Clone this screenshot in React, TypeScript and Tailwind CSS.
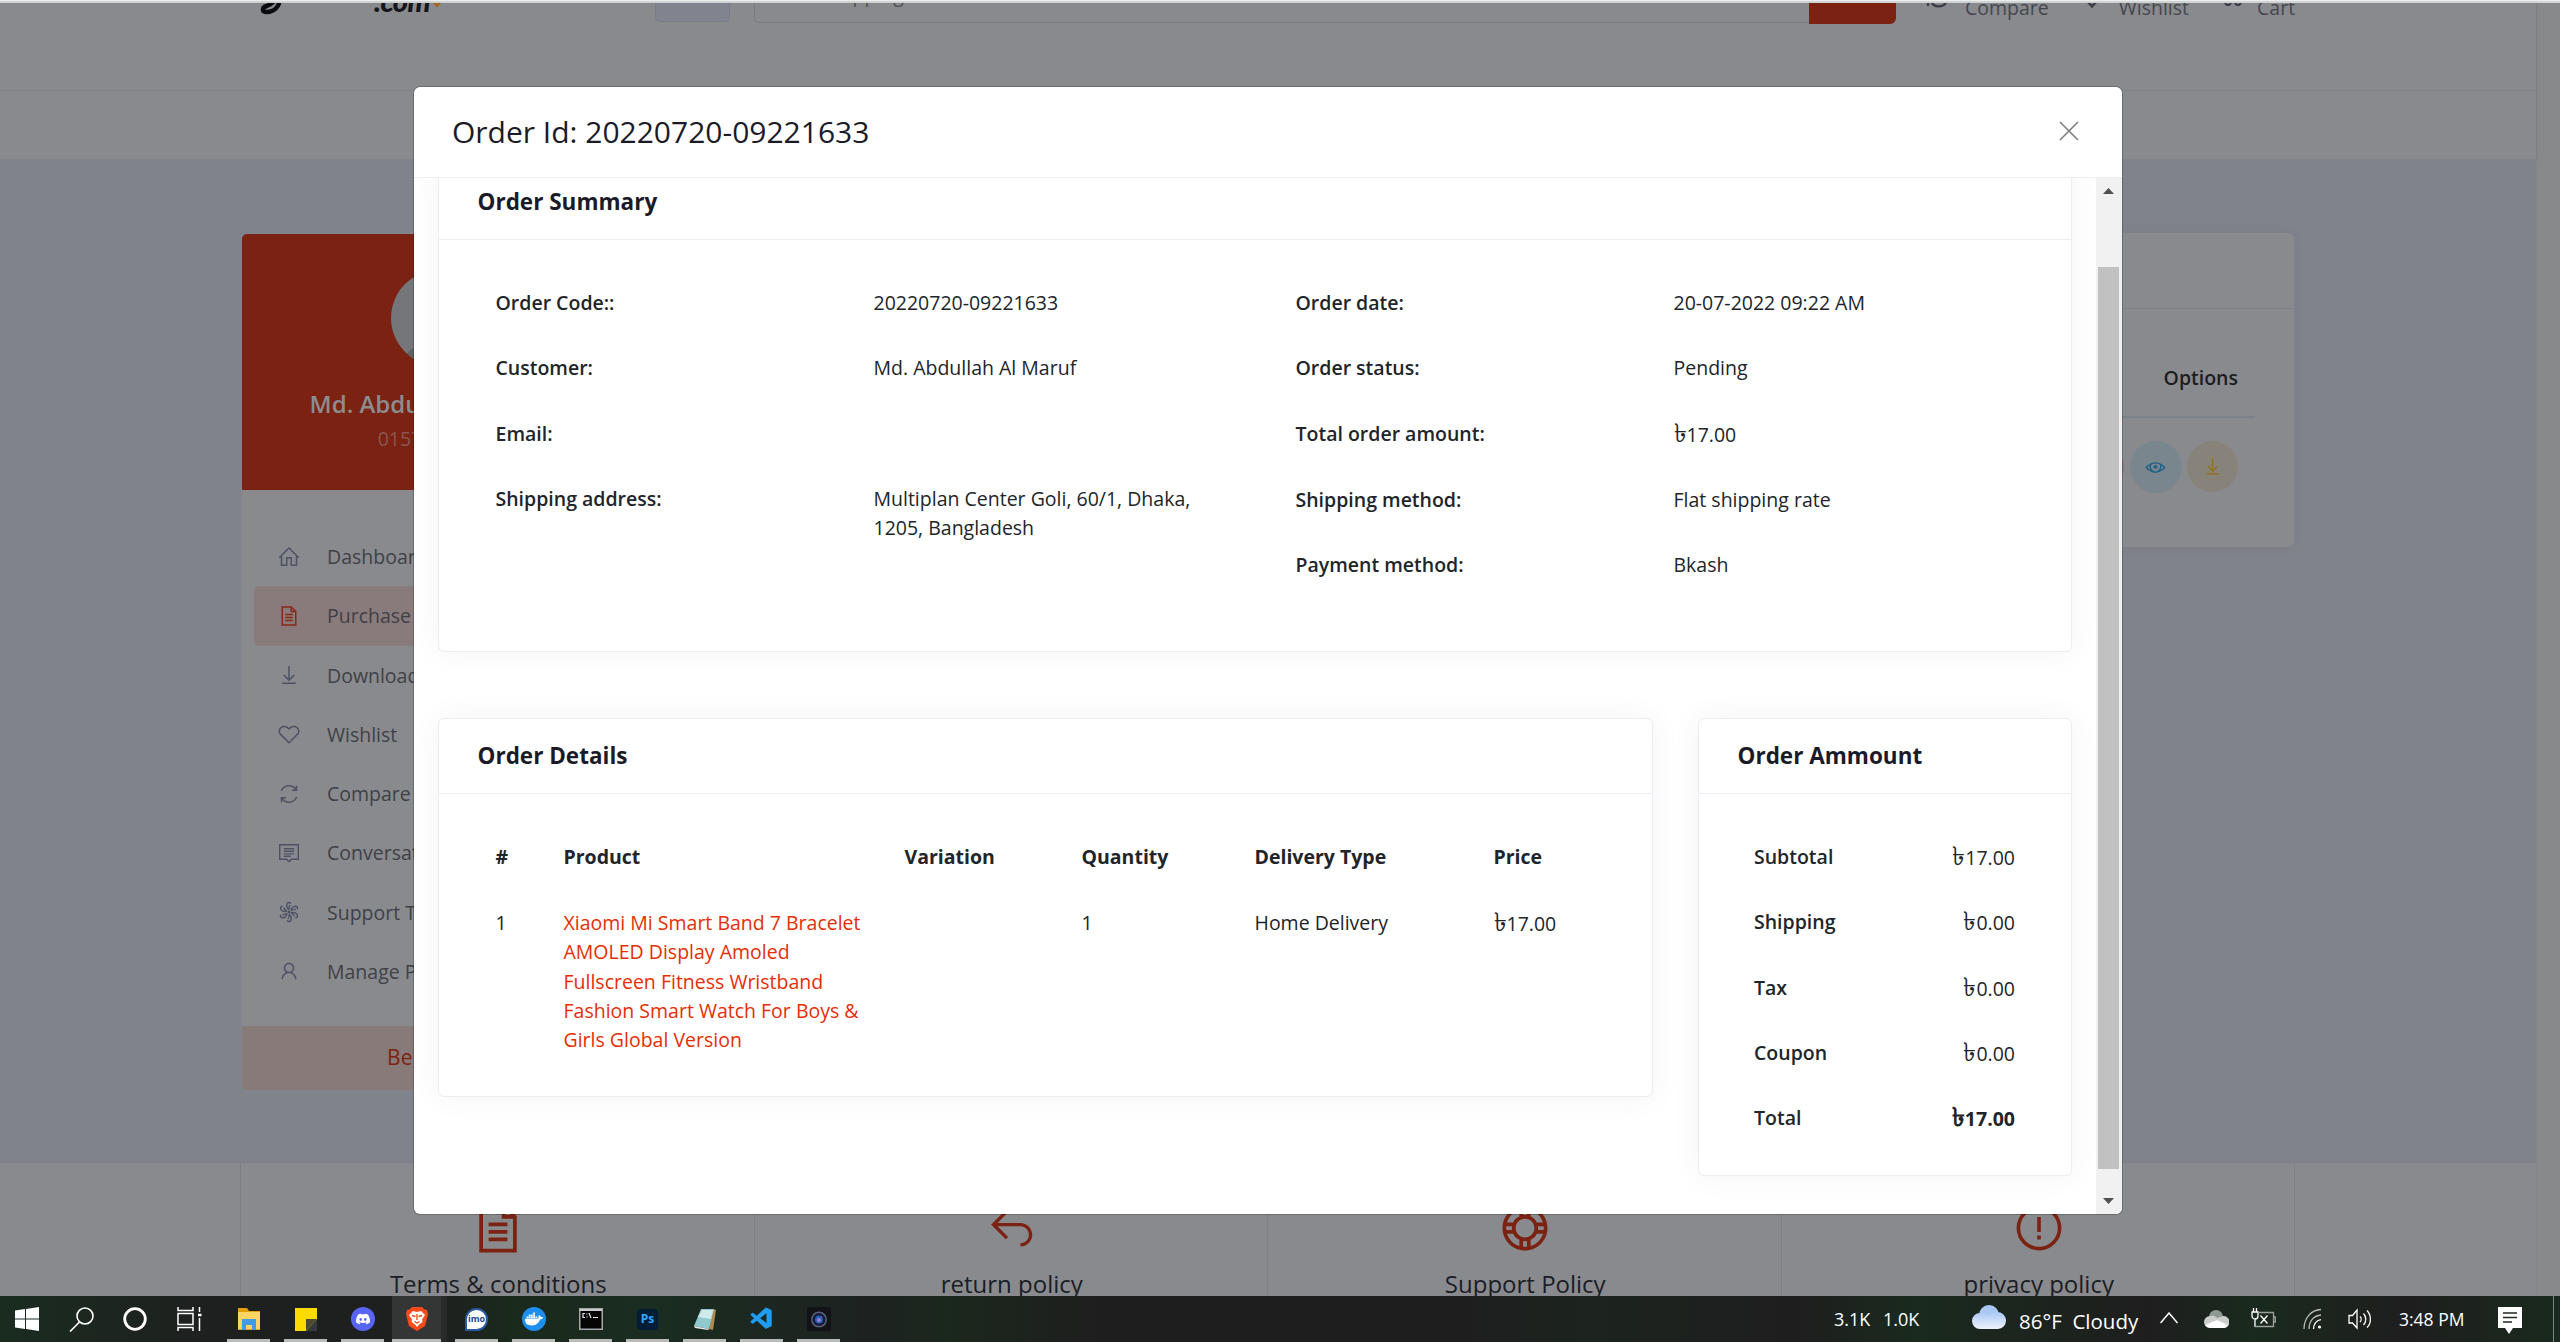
import React from "react";
import {
  LiaHomeSolid,
  LiaFileAlt,
  LiaDownloadSolid,
  LiaHeart,
  LiaSyncSolid,
  LiaUser,
  LiaEye,
  LiaReplySolid,
  LiaLifeRing,
} from "react-icons/lia";
import { SiDiscord, SiDocker } from "react-icons/si";
import { VscVscode } from "react-icons/vsc";

const summaryLeft = [
  ["Order Code::", "20220720-09221633"],
  ["Customer:", "Md. Abdullah Al Maruf"],
  ["Email:", ""],
  ["Shipping address:", "Multiplan Center Goli, 60/1, Dhaka, 1205, Bangladesh"],
];
const summaryRight = [
  ["Order date:", "20-07-2022 09:22 AM"],
  ["Order status:", "Pending"],
  ["Total order amount:", "৳17.00"],
  ["Shipping method:", "Flat shipping rate"],
  ["Payment method:", "Bkash"],
];
const amounts = [
  ["Subtotal", "৳17.00"],
  ["Shipping", "৳0.00"],
  ["Tax", "৳0.00"],
  ["Coupon", "৳0.00"],
];

/* The taka sign is set larger than the digits that follow it. */
function Value({ text }: { text: string }) {
  if (!text.startsWith("৳")) return <>{text}</>;
  return (
    <>
      <span className="text-[26px] leading-none">৳</span>
      {text.slice(1)}
    </>
  );
}

function MessageIcon() {
  return (
    <svg width="24" height="24" viewBox="0 0 24 24" fill="none" stroke="currentColor" strokeWidth="1.4">
      <path d="M2.7 3.7h18.6v14.6h-6.8L12 20.6l-2.5-2.3H2.7z" />
      <path d="M6.8 7.7h10.4M6.8 10.3h10.4M6.8 12.9h10.4M6.8 15.3h7" />
    </svg>
  );
}

function PinwheelIcon() {
  const arm = "M12 9.600C9.800 8.500 9 5.500 10.300 3.400C11.200 2 13.300 2.200 13.900 3.600M12 9.600C11.600 7.800 12 6.200 13.200 4.900";
  return (
    <svg width="24" height="24" viewBox="0 0 24 24" fill="none" stroke="currentColor" strokeWidth="1.4">
      <path d={arm} />
      <path d={arm} transform="rotate(60 12 12)" />
      <path d={arm} transform="rotate(120 12 12)" />
      <path d={arm} transform="rotate(180 12 12)" />
      <path d={arm} transform="rotate(240 12 12)" />
      <path d={arm} transform="rotate(300 12 12)" />
      <circle cx="12" cy="12" r="1.500" fill="currentColor" stroke="none" />
    </svg>
  );
}

const menu = [
  { icon: <LiaHomeSolid size={24} />, label: "Dashboard" },
  { icon: <LiaFileAlt size={24} />, label: "Purchase History", active: true },
  { icon: <LiaDownloadSolid size={24} />, label: "Downloads" },
  { icon: <LiaHeart size={24} />, label: "Wishlist" },
  { icon: <LiaSyncSolid size={24} />, label: "Compare" },
  { icon: <MessageIcon />, label: "Conversations" },
  { icon: <PinwheelIcon />, label: "Support Ticket" },
  { icon: <LiaUser size={24} />, label: "Manage Profile" },
];

function TopBar() {
  return (
    <header className="h-[156px] shrink-0 bg-[#898a8d] shadow-[0_1px_3px_rgba(0,0,0,0.12)]">
      <div className="flex h-[88px] items-start overflow-hidden border-b border-[#808184]">
        <div className="ml-[255px] flex w-[400px] items-start">
          <svg width="190" height="16" viewBox="0 0 190 16" className="shrink-0">
            <path d="M25 -4C24 4 19 9 12 9C6.500 9 7 4.500 11.500 3C16 1.500 19 -1 21 -5" fill="none" stroke="#0b0c10" strokeWidth="4.500" />
            <path d="M178 0h8l-4 4.500z" fill="#a8651a" />
          </svg>
          <span className="-mt-[19px] -ml-[71px] font-['Lato'] text-[29px] leading-[34px] font-black tracking-[-0.5px] text-[#15161b] italic">
            .com
          </span>
        </div>
        <div className="h-[19px] w-[75px] rounded-b-[5px] border border-t-0 border-[#797c86] bg-[#81848f]" />
        <div className="ml-[24px] flex h-[20px] w-[1055px] items-start rounded-bl-[5px] border-b border-l border-[#7a7b7e] pl-5">
          <span className="-mt-[23px] text-[19.5px] leading-[29px] text-[#505156]">I am shopping for...</span>
        </div>
        <div className="h-[21px] w-[87px] rounded-br-[6px] bg-[#7b2212]" />
        <div className="ml-[28px] flex h-[29px] text-[19.5px] leading-[29px] text-[#46474d]">
          <svg width="26" height="8" viewBox="0 0 26 8" className="mr-[15px]" fill="none" stroke="#3a3b44" strokeWidth="2.2">
            <path d="M4 -1v4M8 0c2 4 10 5 14 0" />
          </svg>
          <span className="-mt-[10px]">Compare</span>
          <svg width="20" height="8" viewBox="0 0 20 8" className="mr-[17px] ml-[33px]" fill="none" stroke="#3a3b44" strokeWidth="2.4">
            <path d="M6 -1l4 4.500l4-4.500" />
          </svg>
          <span className="-mt-[10px]">Wishlist</span>
          <svg width="22" height="8" viewBox="0 0 22 8" className="mr-[13px] ml-[33px]" fill="none" stroke="#3a3b44" strokeWidth="2.2">
            <path d="M3 -1c1 4 5 4 6 0M13 -1c1 4 5 4 6 0" />
          </svg>
          <span className="-mt-[10px]">Cart</span>
        </div>
      </div>
    </header>
  );
}

function Sidebar() {
  return (
    <aside className="h-[858px] w-[396px] overflow-hidden rounded-[6px] border border-[#84868c] bg-[#898a8d]">
      <div className="flex h-[256px] flex-col items-center bg-[#7b2212] pt-[36px]">
        <div className="size-[96px] overflow-hidden rounded-full bg-[#757679]">
          <div className="mt-[71px] ml-[8px] h-[60px] w-[80px] rounded-[50%] bg-[#5f6063]" />
        </div>
        <div className="mt-[20px] text-[24px] leading-[36px] font-semibold text-[#8c8d8f]">Md. Abdullah Al Maruf</div>
        <div className="mt-[2px] text-[19.5px] leading-[29px] text-[#8a5750]">01570000000</div>
      </div>
      <nav className="flex h-[536px] flex-col px-[12px] pt-[37px]">
        {menu.map((m) => (
          <div
            key={m.label}
            className={
              m.active
                ? "flex h-[59.25px] items-center rounded-[5px] bg-[#897a7b] text-[#8a2716]"
                : "flex h-[59.25px] items-center text-[#4e5164]"
            }
          >
            <span className="ml-[23px] flex w-[24px] justify-center">{m.icon}</span>
            <span className="ml-[26px] text-[19.5px] text-[#3f4147]">{m.label}</span>
          </div>
        ))}
      </nav>
      <div className="flex h-[64px] items-center justify-center bg-[#887a79] text-[21px] text-[#7b2212]">Be A Seller</div>
    </aside>
  );
}

function HistoryCard() {
  return (
    <div className="h-[314px] w-[1612px] rounded-[6px] bg-[#898a8d] shadow-[0_0_20px_rgba(0,0,0,0.03)]">
      <div className="h-[76px] border-b border-[#7f8186]" />
      <div className="mr-[39px] ml-[38px] flex h-[109px] items-center justify-end border-b-2 border-[#7b8188] pt-[31px] pr-[17px] text-[19.5px] font-semibold text-[#1b1d22]">
        Options
      </div>
      <div className="mt-[23px] flex justify-end gap-[5.5px] pr-[56px]">
        <span className="size-[51px] rounded-full bg-[#88797d]" />
        <span className="flex size-[52px] items-center justify-center rounded-full bg-[#79868e] text-[#1d6288]">
          <LiaEye size={21} />
        </span>
        <span className="flex size-[51px] items-center justify-center rounded-full bg-[#87837a] text-[#94701c]">
          <LiaDownloadSolid size={21} />
        </span>
      </div>
    </div>
  );
}

const policies = [
  { label: "Terms & conditions", icon: <LiaFileAlt size={60} /> },
  { label: "return policy", icon: <LiaReplySolid size={54} /> },
  { label: "Support Policy", icon: <LiaLifeRing size={60} /> },
  {
    label: "privacy policy",
    icon: (
      <svg width="54" height="54" viewBox="0 0 54 54" fill="none" stroke="currentColor" strokeWidth="3.6">
        <circle cx="27" cy="27" r="20.6" />
        <path d="M27 16v15M27 34.500v4" />
      </svg>
    ),
  },
];

function Policies() {
  return (
    <section className="flex h-[134px] shrink-0 overflow-hidden border-t border-[#7c7f83] bg-[#898a8d] pl-[240px]">
      <div className="flex border-l border-[#7c7f83]">
        {policies.map((p) => (
          <div key={p.label} className="flex h-[180px] w-[513.5px] flex-col items-center border-r border-[#7c7f83] pt-[35px] pl-[2px] text-[#7b2212]">
            <span className="flex h-[60px] items-center">{p.icon}</span>
            <span className="mt-[8px] text-[24px] leading-[36px] text-[#1b1d25]">{p.label}</span>
          </div>
        ))}
      </div>
    </section>
  );
}

function PairTable({ rows }: { rows: string[][] }) {
  return (
    <div className="w-[754px]">
      {rows.map(([k, v]) => (
        <div key={k} className="flex py-[18px] leading-[29.25px]">
          <div className="w-[378px] pl-[18px] font-semibold">{k}</div>
          <div className="w-[376px] pr-[17px] pl-[18px]">
            <Value text={v} />
          </div>
        </div>
      ))}
    </div>
  );
}

function CardTitle({ children }: { children: React.ReactNode }) {
  return (
    <div className="flex h-[75px] items-center border-b-[1.5px] border-[#ebedf2] pb-px pl-[38.5px] text-[22.5px] font-bold text-[#1b1b28]">
      {children}
    </div>
  );
}

function OrderModal() {
  const card = "rounded-[6px] border-[1.5px] border-[#ebedf2] bg-white shadow-[0_0_30px_rgba(82,63,105,0.06)]";
  return (
    <div className="absolute top-[87px] left-[414px] flex h-[1127px] w-[1708px] flex-col overflow-hidden rounded-[6px] bg-white shadow-[0_0_0_1px_rgba(0,0,0,0.22)]">
      <div className="flex h-[91px] shrink-0 items-center justify-between border-b-[1.5px] border-[#ebedf2] pr-[43px] pb-[2px] pl-[38px]">
        <h5 className="text-[30px] text-[#1b1b28]">Order Id: 20220720-09221633</h5>
        <svg width="20" height="20" viewBox="0 0 20 20" stroke="#7d7d7d" strokeWidth="1.6">
          <path d="M1 1l18 18M19 1L1 19" />
        </svg>
      </div>
      <div className="flex min-h-0 flex-1">
        <div className="min-w-0 flex-1 overflow-hidden pl-[24px] text-[19.5px] text-[#212529]">
          <div className={`${card} -mt-[14px] h-[488px] w-[1634px]`}>
            <CardTitle>Order Summary</CardTitle>
            <div className="flex gap-[46px] pt-[30px] pl-[38.5px]">
              <PairTable rows={summaryLeft} />
              <PairTable rows={summaryRight} />
            </div>
          </div>
          <div className="mt-[66px] flex items-start gap-[45px]">
            <div className={`${card} h-[379px] w-[1215px]`}>
              <CardTitle>Order Details</CardTitle>
              <div className="grid grid-cols-[68px_341px_177px_173px_239px_1fr] gap-y-[36.75px] pt-[48px] pl-[56.5px] leading-[29.25px] [&>b]:font-bold">
                <b>#</b>
                <b>Product</b>
                <b>Variation</b>
                <b>Quantity</b>
                <b>Delivery Type</b>
                <b>Price</b>
                <span>1</span>
                <span className="w-[305px] text-[#e62e04]">
                  Xiaomi Mi Smart Band 7 Bracelet AMOLED Display Amoled Fullscreen Fitness Wristband Fashion Smart Watch For Boys &amp; Girls Global Version
                </span>
                <span />
                <span>1</span>
                <span>Home Delivery</span>
                <span>
                  <Value text="৳17.00" />
                </span>
              </div>
            </div>
            <div className={`${card} h-[458px] w-[374px]`}>
              <CardTitle>Order Ammount</CardTitle>
              <div className="pt-[30px] pr-[56px] pl-[55px] leading-[29.25px]">
                {amounts.map(([k, v]) => (
                  <div key={k} className="flex h-[65.25px] justify-between py-[18px]">
                    <span className="font-semibold">{k}</span>
                    <span>
                      <Value text={v} />
                    </span>
                  </div>
                ))}
                <div className="flex justify-between py-[18px]">
                  <span className="font-semibold">Total</span>
                  <span className="font-bold">
                    <Value text="৳17.00" />
                  </span>
                </div>
              </div>
            </div>
          </div>
        </div>
        <div className="flex w-[26px] shrink-0 flex-col items-center bg-[#f1f1f1] pr-px">
          <svg width="11" height="6" viewBox="0 0 11 6" className="mt-[10px]">
            <path d="M5.500 0L11 6H0z" fill="#505050" />
          </svg>
          <div className="mt-[73px] h-[902px] w-[21px] bg-[#c1c1c1]" />
          <svg width="11" height="6" viewBox="0 0 11 6" className="mt-[29px]">
            <path d="M0 0h11L5.500 6z" fill="#505050" />
          </svg>
        </div>
      </div>
    </div>
  );
}

const apps = [
  <svg key="explorer" width="24" height="24" viewBox="0 0 24 24">
    <path d="M1 1h9l2 3h11v19H1z" fill="#e3a008" />
    <path d="M1 5h22v17H1z" fill="#fcd462" />
    <path d="M5 12h14v11h-4v-5H9v5H5z" fill="#3f9be3" />
  </svg>,
  <svg key="notes" width="24" height="24" viewBox="0 0 24 24">
    <path d="M1 1h22v12L13 24H1z" fill="#fedb00" />
    <path d="M23 12v12H12z" fill="#343a40" />
    <path d="M12 24V12h11z" fill="#4a4a3c" />
  </svg>,
  <span key="discord" className="flex size-6 items-center justify-center rounded-full bg-[#5865f2] text-white">
    <SiDiscord size={14} />
  </span>,
  <svg key="brave" width="22" height="24" viewBox="0 0 22 24">
    <path d="M6 0h10l2.500 2.500L21 3l1 4-3 12-8 5-8-5L0 7l1-4 2.500-.5z" fill="#fb4a1c" />
    <path d="M7 4l4 1 4-1 4 4-3 4.500.5 2.500-3.500 2.500L11 20l-2-2.500L5.500 15l.5-2.500L3 8z" fill="#fff" />
    <path d="M6 8.500l3.500 1M16 8.500l-3.500 1M11 7v6M8.500 14.500L11 16l2.500-1.500" stroke="#fb4a1c" strokeWidth="1.400" fill="none" />
  </svg>,
  <span key="imo" className="flex size-[23px] items-center justify-center rounded-full rounded-bl-[4px] border-[2.5px] border-[#2a5ba0] bg-white text-[9px] font-bold text-[#20488c]">
    imo
  </span>,
  <span key="docker" className="flex size-6 items-center justify-center rounded-full bg-[#1d8fee] text-white">
    <SiDocker size={18} />
  </span>,
  <svg key="cmd" width="24" height="22" viewBox="0 0 24 22">
    <rect x="0.750" y="0.750" width="22.500" height="20.500" fill="#050505" stroke="#a5a8aa" strokeWidth="1.500" />
    <path d="M1 2h22" stroke="#c9cbcc" strokeWidth="2" />
    <path d="M6 5.500H4v4h2M8 5.500v1M8 8.500v1M10 5l2 5M14 9.500h5" stroke="#e8e8e8" strokeWidth="1.200" fill="none" />
  </svg>,
  <span key="ps" className="flex size-[21px] items-center justify-center rounded-[4px] bg-[#001e36] text-[12px] font-bold text-[#31a8ff]">
    Ps
  </span>,
  <svg key="notepad" width="24" height="24" viewBox="0 0 24 24">
    <path d="M20 2l3 1-3 20-4-1z" fill="#b08b4c" />
    <path d="M8 2l13 0-5 20L1 19z" fill="#8fc9cf" />
    <path d="M9 3l11 0-2 9L5 10z" fill="#cfeaea" />
    <path d="M1 19l15 3-1 1L2 21z" fill="#e8e8e8" />
  </svg>,
  <VscVscode key="code" size={26} color="#1f9cf0" />,
  <svg key="camera" width="24" height="24" viewBox="0 0 24 24">
    <rect width="24" height="24" rx="1.500" fill="#111318" />
    <circle cx="12" cy="12.500" r="8" fill="#59616e" />
    <circle cx="12" cy="12.500" r="6.500" fill="#141a3a" />
    <circle cx="12" cy="12.500" r="4" fill="#2b5fb0" />
    <circle cx="12" cy="13" r="2" fill="#a77bd0" />
  </svg>,
];

function Taskbar() {
  return (
    <footer className="relative flex h-[46px] shrink-0 items-stretch bg-[linear-gradient(90deg,#1a2c20_0%,#1e201f_8%,#1e1f1f_17%,#1a2a1c_20%,#1b2c21_26%,#1d2220_34%,#1b281d_37%,#1e1e1e_43%,#1e1e1e_57%,#1c241f_62%,#1e1e1e_70%,#1a2a1e_75%,#1e1e1e_84%,#1a2a1e_88%,#1e1e1e_94%,#1a2a1e_100%)] text-white">
      <div className="flex w-[220px] items-center">
        <svg width="24" height="24" viewBox="0 0 24 24" className="ml-[15px]" fill="#fff">
          <path d="M0 3.500l10-1.400v9.400H0zM11 2l13-2v11.500H11zM0 12.500h10v9.400L0 20.500zM11 12.500h13V24l-13-2z" />
        </svg>
        <svg width="25" height="25" viewBox="0 0 25 25" className="ml-[30px]" fill="none" stroke="#fff" strokeWidth="1.600">
          <circle cx="16" cy="9" r="8" />
          <path d="M10.500 15L1 24.500" />
        </svg>
        <svg width="24" height="24" viewBox="0 0 24 24" className="ml-[29px]" fill="none" stroke="#fff" strokeWidth="2.800">
          <circle cx="12" cy="12" r="10.300" />
        </svg>
        <svg width="25" height="24" viewBox="0 0 25 24" className="ml-[30px]" fill="none" stroke="#fff" strokeWidth="1.500">
          <path d="M1 6.500h15v11H1zM1 0v3.500h15V0M1 24v-3.500h15V24M22.500 0v5M22.500 11v13" />
          <path d="M21 8h3.500" strokeWidth="2.500" />
        </svg>
      </div>
      <div className="flex">
        {apps.map((a, i) => (
          <div key={i} className="flex w-[57px] justify-center">
            <div
              className={
                i === 3
                  ? "flex h-[46px] w-[55px] flex-col items-center justify-between border-r-[6px] border-[#292b2a] bg-[#333635] pt-[11px]"
                  : "flex h-[46px] w-[43px] flex-col items-center justify-between pt-[11px]"
              }
            >
              <span className="flex h-[24px] items-center">{a}</span>
              <span className="h-[3px] w-full bg-[#b9bbba]" />
            </div>
          </div>
        ))}
      </div>
      <div className="ml-auto flex items-center text-[18px]">
        <span className="w-[49px]">3.1K</span>
        <span className="w-[89px]">1.0K</span>
        <svg width="34" height="24" viewBox="0 0 34 24" className="-mt-[5px]">
          <defs>
            <linearGradient id="cl" x1="0" y1="0" x2="0" y2="1">
              <stop offset="0" stopColor="#a9c8f5" />
              <stop offset="1" stopColor="#eef2fb" />
            </linearGradient>
          </defs>
          <circle cx="17" cy="10" r="10" fill="#a9c8f5" />
          <path d="M8 8a8 8 0 0 1 8 3a8.500 8.500 0 0 1 9-4a8.500 8.500 0 0 1 1 17H8A8 8 0 0 1 8 8z" fill="url(#cl)" />
        </svg>
        <span className="mt-[5px] ml-[13px] w-[141px] text-[20.5px] whitespace-pre">86°F  Cloudy</span>
        <svg width="18" height="12" viewBox="0 0 18 12" fill="none" stroke="#fff" strokeWidth="1.500" className="-mt-[2px]">
          <path d="M0.500 11L9 1l8.500 10" />
        </svg>
        <svg width="25" height="18" viewBox="0 0 25 18" className="ml-[26px]">
          <circle cx="12" cy="7" r="7" fill="#8f9994" />
          <path d="M6 6a6 6 0 0 1 7 2l6-2a6 6 0 0 1 1 12H6A6 6 0 0 1 6 6z" fill="#c9cdcb" />
          <path d="M1 15l12-5 11 5a5 5 0 0 1-4 3H6a6 6 0 0 1-5-3z" fill="#fff" />
        </svg>
        <svg width="25" height="21" viewBox="0 0 25 21" className="-mt-px ml-[22px]" fill="none" stroke="#fff" strokeWidth="1.300">
          <path d="M1 4h6v4a3 3 0 0 1-6 0zM2.500 0v4M5.500 0v4M4 11v8M9.500 7.500l7 8M16.500 7.500l-7 8" />
          <path d="M7 4.500h15.500v14H4M22.500 9h1.800v5h-1.800" stroke="#9aa09c" />
        </svg>
        <svg width="20" height="22" viewBox="0 0 20 22" className="ml-[27px]" fill="none" stroke="#fff" strokeWidth="1.300">
          <path d="M1 21C1 10 8 2 18 1.500M6 21c0-8 5-13.500 12-14" stroke="#b9bfbb" />
          <path d="M10.500 21c0-5 3-9 7.500-9.300" />
          <circle cx="16.500" cy="19" r="1.600" fill="#fff" stroke="none" />
        </svg>
        <svg width="24" height="22" viewBox="0 0 24 22" className="ml-[25px]" fill="none" stroke="#fff" strokeWidth="1.300">
          <path d="M1 7.500h3.500L9 2v18l-4.500-5H1zM12 8.500c1.500 1.500 1.500 4 0 5.500M15.500 5.500c3 3 3 8.500 0 11.500M19 2.500c4.500 4.500 4.500 13 0 17" />
        </svg>
        <span className="ml-[27px] w-[99px] text-[17.5px]">3:48 PM</span>
        <svg width="24" height="27" viewBox="0 0 24 27" className="mt-[2px]">
          <path d="M0 0h24v21h-9l-4 6-4-6H0z" fill="#fff" />
          <path d="M5 6h14M5 10.500h14M5 15h9" stroke="#1b2a20" strokeWidth="1.400" />
        </svg>
        <span className="mr-[6px] ml-[31px] h-[46px] w-px bg-[#7b857f]" />
      </div>
    </footer>
  );
}

export default function App() {
  return (
    <div className="relative flex h-[1342px] w-[2560px] flex-col overflow-hidden bg-[#898a8d] font-['Open_Sans','Noto_Sans',sans-serif]">
      <div className="h-[3px] shrink-0 border-t border-[#eceeee] bg-[#d3d6d6]" />
      <div className="flex h-[1293px] shrink-0 bg-[#88898b]">
        <div className="flex w-[2537px] flex-col border-r border-[#848588]">
          <TopBar />
          <main className="flex h-[1003px] shrink-0 items-start gap-[45px] bg-[#80838b] pt-[74px] pl-[241px]">
            <Sidebar />
            <HistoryCard />
          </main>
          <Policies />
        </div>
      </div>
      <Taskbar />
      <OrderModal />
    </div>
  );
}
